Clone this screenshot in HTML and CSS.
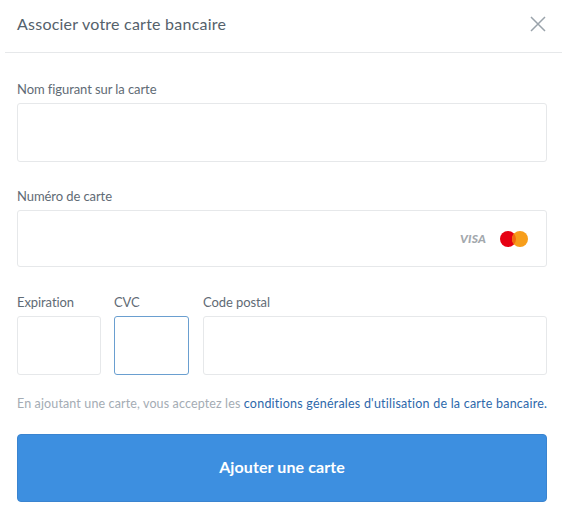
FILE: index.html
```html
<!DOCTYPE html>
<html lang="fr">
<head>
<meta charset="utf-8">
<title>Associer votre carte bancaire</title>
<link rel="stylesheet" href="styles.css">
</head>
<body>
<div class="modal">
  <header class="head">
    <h1 class="title">Associer votre carte bancaire</h1>
    <button class="close" type="button" aria-label="Fermer">
      <svg width="16" height="16" viewBox="0 0 16 16"><path d="M1 1L15 15M15 1L1 15" stroke="#9aa3ab" stroke-width="1.5" fill="none"/></svg>
    </button>
  </header>
  <form class="form">
    <div class="field name">
      <label class="label">Nom figurant sur la carte</label>
      <div class="box tall"></div>
    </div>
    <div class="field number">
      <label class="label">Numéro de carte</label>
      <div class="box short cards">
        <span class="visa">VISA</span>
        <svg class="mc" width="28" height="16" viewBox="0 0 28 16"><circle cx="8" cy="8" r="8" fill="#e60012"/><circle cx="20" cy="8" r="8" fill="#f79e1b"/><path d="M14 2.7a8 8 0 0 1 0 10.6a8 8 0 0 1 0-10.6z" fill="#f26a10"/></svg>
      </div>
    </div>
    <div class="row">
      <div class="field exp">
        <label class="label">Expiration</label>
        <div class="box tall"></div>
      </div>
      <div class="field cvc">
        <label class="label">CVC</label>
        <div class="box tall focus"></div>
      </div>
      <div class="field zip">
        <label class="label">Code postal</label>
        <div class="box tall"></div>
      </div>
    </div>
    <p class="legal">En ajoutant une carte, vous acceptez les <a class="link" href="#">conditions générales d'utilisation de la carte bancaire.</a></p>
    <button class="submit" type="button">Ajouter une carte</button>
  </form>
</div>
</body>
</html>
```
FILE: styles.css
```css
* { box-sizing: border-box; }
html, body { margin: 0; padding: 0; background: #fff; }
body { font-family: Lato, "Liberation Sans", sans-serif; width: 562px; height: 521px; overflow: hidden; }
.modal { padding-left: 5px; }
.head {
  height: 53px;
  display: flex;
  align-items: center;
  justify-content: space-between;
  padding: 0 16px 5px 12px;
  border-bottom: 1px solid #e6e8ea;
}
.title { margin: 0; font-size: 16px; font-weight: 400; color: #55616b; letter-spacing: 0.23px; }
.close { border: 0; background: none; padding: 0; display: flex; }
.form { padding: 26px 15px 0 12px; }
.field { display: flex; flex-direction: column; }
.label { font-size: 13px; line-height: 20px; color: #5f6b75; height: 24px; letter-spacing: -0.08px; }
.box { border: 1px solid #e6e8ea; border-radius: 3px; background: #fff; }
.tall { height: 59px; }
.short { height: 57px; }
.number { margin-top: 24px; }
.cards { display: flex; align-items: center; justify-content: flex-end; padding-right: 18px; }
.visa { font-size: 12px; font-weight: 900; font-style: italic; color: #a3a8ad; margin-right: 14px; letter-spacing: 0.2px; }
.row { display: flex; margin-top: 25px; gap: 14px; }
.exp { width: 84px; flex: none; margin-right: -1px; }
.cvc { width: 75px; flex: none; }
.zip { flex: 1; }
.focus { border-color: #6a9fd0; }
.legal { margin: 20px 0 0; font-size: 12.5px; line-height: 18px; color: #a4acb4; white-space: nowrap; letter-spacing: 0.13px; }
.link { color: #2d68ab; text-decoration: none; letter-spacing: 0.22px; }
.submit {
  display: block;
  width: 100%;
  height: 68px;
  margin-top: 21px;
  padding: 0 0 4px;
  border: 1px solid #3a84d0;
  border-radius: 4px;
  background: #3d8fe0;
  color: #fff;
  font-family: inherit;
  font-size: 16px;
  font-weight: 700;
  letter-spacing: 0.1px;
}
```
